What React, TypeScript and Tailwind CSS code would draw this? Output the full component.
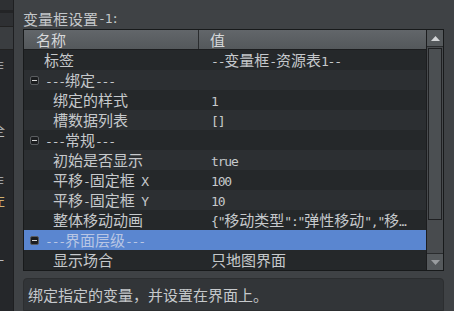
const CJK = /[\u3000-\u9fff\uff00-\uffef]/;

// CJK glyphs come out bigger than the mono latin run in the original, so split them
function Mixed({ text }: { text: string }) {
  const parts = text.match(/[\u3000-\u9fff\uff00-\uffef]+|[^\u3000-\u9fff\uff00-\uffef]+/g) ?? [];
  return (
    <>
      {parts.map((p, i) =>
        CJK.test(p) ? (
          <span key={i} className="font-['Noto_Sans_CJK_SC',sans-serif] text-[15px]">
            {p}
          </span>
        ) : (
          <span key={i} className="font-['DejaVu_Sans_Mono',monospace] text-[13px] tracking-[-1.2px]">
            {p}
          </span>
        )
      )}
    </>
  );
}

type Row =
  | { kind: "group"; label: string; selected?: boolean }
  | { kind: "item"; label: string; value: string; depth: number };

const ROWS: Row[] = [
  { kind: "item", label: "标签", value: "--变量框-资源表1--", depth: 0 },
  { kind: "group", label: "---绑定---" },
  { kind: "item", label: "绑定的样式", value: "1", depth: 1 },
  { kind: "item", label: "槽数据列表", value: "[]", depth: 1 },
  { kind: "group", label: "---常规---" },
  { kind: "item", label: "初始是否显示", value: "true", depth: 1 },
  { kind: "item", label: "平移-固定框 X", value: "100", depth: 1 },
  { kind: "item", label: "平移-固定框 Y", value: "10", depth: 1 },
  { kind: "item", label: "整体移动动画", value: '{"移动类型":"弹性移动","移…', depth: 1 },
  { kind: "group", label: "---界面层级---", selected: true },
  { kind: "item", label: "显示场合", value: "只地图界面", depth: 1 },
];

function MinusBox() {
  return (
    <span className="flex h-[9px] w-[9px] items-center justify-center rounded-[2px] border border-[#5a5d60] bg-[#1c1e20]">
      <span className="h-px w-[5px] bg-[#d8d8d8]" />
    </span>
  );
}

export default function App() {
  return (
    <div className="flex h-[311px] w-[454px] overflow-hidden bg-[#3f4245] text-[#c6c9cc]">
      {/* neighbouring dock, mostly cut off */}
      <div className="flex w-[13px] flex-col overflow-hidden bg-[#25272a]">
        <div className="h-[10px] bg-[#2e3033]" />
        <div className="h-[3px] bg-[#232426]" />
        <div className="h-[13px] bg-[#2e3033]" />
        <div className="h-[24px] border-y border-[#222] bg-[#3a3d40]" />
        <div className="relative flex-1">
          <span className="absolute left-[-8px] top-[5px] text-[13px] text-[#b8bbbe] font-['Noto_Sans_CJK_SC',sans-serif]">
            ≡
          </span>
          <span className="absolute left-[-8px] top-[70px] text-[13px] text-[#b8bbbe] font-['Noto_Sans_CJK_SC',sans-serif]">
            全
          </span>
          <span className="absolute left-[-8px] top-[120px] text-[13px] text-[#b8bbbe] font-['Noto_Sans_CJK_SC',sans-serif]">
            ≡
          </span>
          <span className="absolute left-[-8px] top-[140px] text-[13px] text-[#d0b070] font-['Noto_Sans_CJK_SC',sans-serif]">
            左
          </span>
          <span className="absolute left-[-9px] top-[200px] text-[13px] text-[#b8bbbe] font-['Noto_Sans_CJK_SC',sans-serif]">
            一
          </span>
        </div>
      </div>
      <div className="w-px bg-[#1e1f21]" />

      <div className="flex flex-1 flex-col pl-[9px] pr-[10px]">
        <div className="flex h-[29px] items-end pb-px leading-[18px] text-[#c4c7ca]">
          <Mixed text="变量框设置-1:" />
        </div>

        <div className="flex h-[242px] border border-[#181a1b]">
          <div className="flex min-w-0 flex-1 flex-col">
            <div className="flex h-[20px] shrink-0 border-b border-[#1c1d1f] bg-gradient-to-b from-[#62666a] to-[#54585b] leading-[19px] text-[#d6d8da]">
              <div className="w-[175px] border-r border-[#2a2c2e] pl-[12px]">
                <Mixed text="名称" />
              </div>
              <div className="flex-1 pl-[11px]">
                <Mixed text="值" />
              </div>
            </div>
            {ROWS.map((r, i) => {
              const bg = r.kind === "group" && r.selected ? "bg-[#5a86d0]" : i % 2 === 0 ? "bg-[#25282a]" : "bg-[#2c2f32]";
              if (r.kind === "group") {
                return (
                  <div key={i} className={`flex h-[20px] items-center whitespace-nowrap ${bg}`}>
                    <div className="pl-[6px] pr-[6px]">
                      <MinusBox />
                    </div>
                    <span className={r.selected ? "text-[#b9c6e4]" : ""}>
                      <Mixed text={r.label} />
                    </span>
                  </div>
                );
              }
              return (
                <div key={i} className={`flex h-[20px] items-center whitespace-nowrap ${bg}`}>
                  <div className={`w-[176px] shrink-0 overflow-hidden ${r.depth === 0 ? "pl-[20px]" : "pl-[29px]"}`}>
                    <Mixed text={r.label} />
                  </div>
                  <div className="min-w-0 flex-1 overflow-hidden pl-[11px]">
                    <Mixed text={r.value} />
                  </div>
                </div>
              );
            })}
          </div>

          <div className="flex w-[17px] shrink-0 flex-col border-l border-[#1c1d1f] bg-[#484b4e]">
            <div className="flex h-[17px] items-center justify-center border-b border-[#2a2c2e] bg-[#55595c]">
              <svg width="9" height="5" viewBox="0 0 9 5">
                <path d="M0 5 L4.5 0 L9 5 Z" fill="#d4d6d8" />
              </svg>
            </div>
            <div className="mx-px mt-[1px] h-[172px] border border-[#1f2022] bg-[#4b4f52]" />
            <div className="flex-1" />
            <div className="flex h-[17px] items-center justify-center border-t border-[#2a2c2e] bg-[#55595c]">
              <svg width="9" height="5" viewBox="0 0 9 5">
                <path d="M0 0 L9 0 L4.5 5 Z" fill="#9a9da0" />
              </svg>
            </div>
          </div>
        </div>

        <div className="mt-[7px] flex-1 rounded-t-[4px] border border-[#2c2e30] bg-[#323538] pl-[4px] pt-[6px] leading-[20px] text-[#c6c9cc]">
          <Mixed text="绑定指定的变量，并设置在界面上。" />
        </div>
      </div>
    </div>
  );
}
